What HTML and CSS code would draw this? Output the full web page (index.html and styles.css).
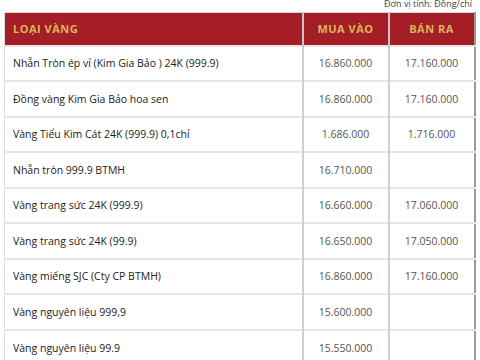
FILE: index.html
```html
<!DOCTYPE html>
<html lang="vi">
<head>
<meta charset="utf-8">
<link rel="stylesheet" href="styles.css">
</head>
<body>
<div class="wrap">
  <div class="unit">Đơn vị tính: Đồng/chỉ</div>
  <table class="price">
    <colgroup><col class="c1"><col class="c2"><col class="c3"></colgroup>
    <thead>
      <tr><th class="name">LOẠI VÀNG</th><th>MUA VÀO</th><th>BÁN RA</th></tr>
    </thead>
    <tbody>
      <tr><td class="name">Nhẫn Tròn ép vỉ (Kim Gia Bảo ) 24K (999.9)</td><td>16.860.000</td><td>17.160.000</td></tr>
      <tr><td class="name">Đồng vàng Kim Gia Bảo hoa sen</td><td>16.860.000</td><td>17.160.000</td></tr>
      <tr><td class="name">Vàng Tiểu Kim Cát 24K (999.9) 0,1chỉ</td><td>1.686.000</td><td>1.716.000</td></tr>
      <tr><td class="name">Nhẫn tròn 999.9 BTMH</td><td>16.710.000</td><td></td></tr>
      <tr><td class="name">Vàng trang sức 24K (999.9)</td><td>16.660.000</td><td>17.060.000</td></tr>
      <tr><td class="name">Vàng trang sức 24K (99.9)</td><td>16.650.000</td><td>17.050.000</td></tr>
      <tr><td class="name">Vàng miếng SJC (Cty CP BTMH)</td><td>16.860.000</td><td>17.160.000</td></tr>
      <tr><td class="name">Vàng nguyên liệu 999,9</td><td>15.600.000</td><td></td></tr>
      <tr><td class="name">Vàng nguyên liệu 99.9</td><td>15.550.000</td><td></td></tr>
    </tbody>
  </table>
</div>
</body>
</html>
```
FILE: styles.css
```css
html, body { margin: 0; padding: 0; background: #fff; }
body { font-family: "Open Sans", "Noto Sans", sans-serif; overflow: hidden; }
.wrap { padding: 0 6px 0 4px; }
.unit {
  height: 12px;
  display: flex;
  justify-content: flex-end;
  align-items: flex-end;
  font-size: 9px;
  line-height: 9px;
  color: #444;
  padding-right: 2px;
  box-sizing: border-box;
  padding-bottom: 4px;
}
.price {
  width: 470px;
  border-collapse: collapse;
  table-layout: fixed;
  border-left: 1px solid #ddd;
  border-right: 2px solid #9a9a9a;
}
.c1 { width: 298px; }
.c2 { width: 86px; }
.c3 { width: 86px; }
.price th {
  height: 33px;
  padding: 0;
  background: #a61e25;
  color: #dcb45a;
  font-size: 11px;
  letter-spacing: 0.5px;
  font-weight: 700;
  text-align: center;
  border-left: 2px solid #c6c6c6;
  border-top: 1px solid #d8d8d8;
  box-sizing: border-box;
}
.price th.name { text-align: left; padding-left: 8px; border-left: none; }
.price td {
  height: 35.5px;
  padding: 0;
  box-sizing: border-box;
  font-size: 10.5px;
  color: #555;
  text-align: center;
  border-left: 2px solid #cfcfcf;
  border-top: 2px solid #e6e6e6;
}
.price td.name {
  text-align: left;
  padding-left: 8px;
  color: #222;
  font-weight: 500;
  border-left: none;
}
```
